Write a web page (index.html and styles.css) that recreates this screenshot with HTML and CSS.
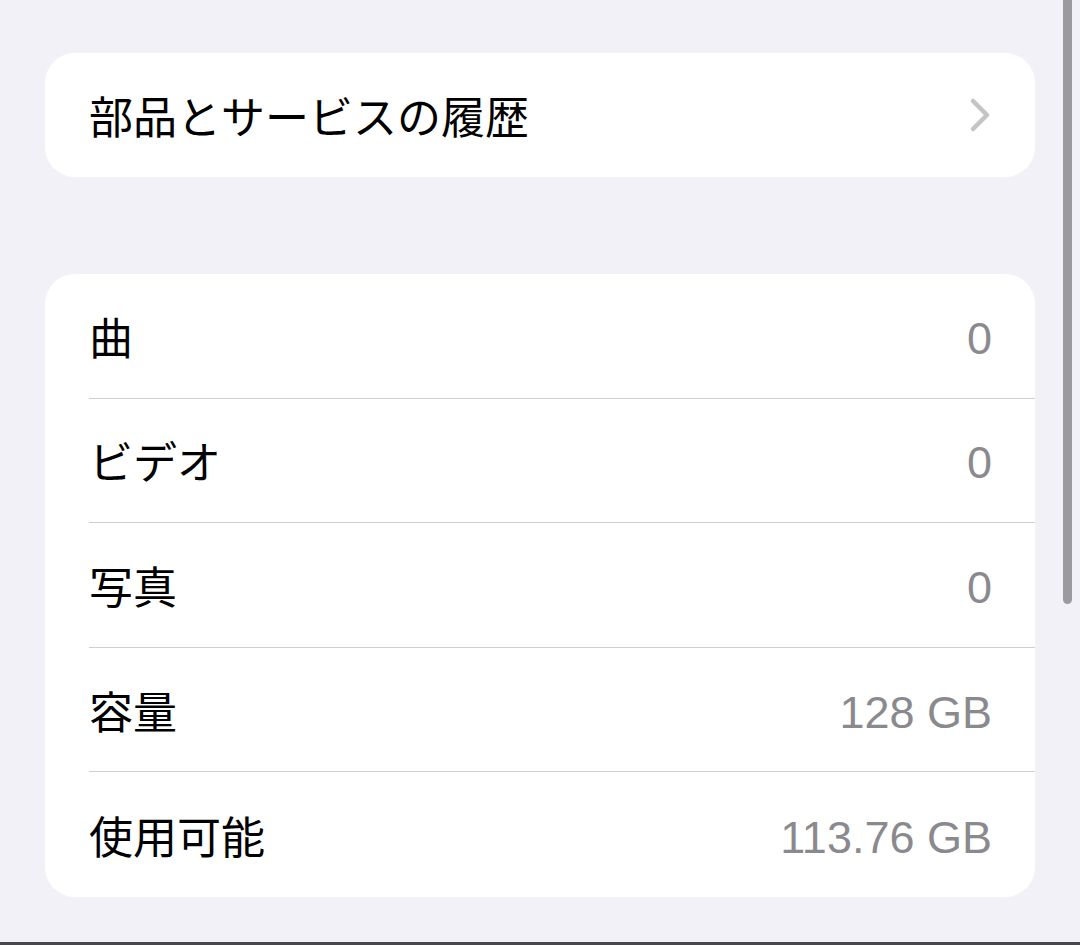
FILE: index.html
```html
<!DOCTYPE html>
<html lang="ja">
<head>
    <meta charset="UTF-8">
    <meta name="viewport" content="width=device-width, initial-scale=1.0">
    <title>情報</title>
    <link rel="stylesheet" href="styles.css">
</head>
<body>
    <div class="screen">
        <div class="content">
            <div class="group">
                <div class="row link">
                    <span class="label">部品とサービスの履歴</span>
                    <svg class="chevron" width="24" height="36" viewBox="0 0 24 36">
                        <path d="M5 4 L19 18 L5 32" fill="none" stroke="#c4c4c7" stroke-width="4.5" stroke-linecap="round" stroke-linejoin="round"/>
                    </svg>
                </div>
            </div>

            <div class="group">
                <div class="row"><span class="label">曲</span><span class="value">0</span></div>
                <div class="row"><span class="label">ビデオ</span><span class="value">0</span></div>
                <div class="row"><span class="label">写真</span><span class="value">0</span></div>
                <div class="row"><span class="label">容量</span><span class="value">128 GB</span></div>
                <div class="row"><span class="label">使用可能</span><span class="value">113.76 GB</span></div>
            </div>
        </div>
        <div class="scrollbar"></div>
    </div>
    <div class="bottom-edge"></div>
</body>
</html>
```

FILE: styles.css
```css
html, body {
    margin: 0;
    height: 100%;
}
body {
    font-family: "Noto Sans CJK JP", "Liberation Sans", sans-serif;
    background-color: #f2f1f7;
    display: flex;
    flex-direction: column;
    overflow: hidden;
}
.screen {
    position: relative;
    flex: 1;
}
.content {
    padding: 53px 45px 0 45px;
    display: flex;
    flex-direction: column;
    gap: 97px;
}
.group {
    background: #fff;
    border-radius: 30px;
    overflow: hidden;
}
.row {
    height: 124.6px;
    margin-left: 44px;
    padding-right: 45px;
    display: flex;
    align-items: center;
    justify-content: space-between;
    border-bottom: 1.5px solid #cfcfd3;
    box-sizing: border-box;
}
.row:last-child {
    border-bottom: none;
}
.link {
    height: 124px;
}
.label {
    font-size: 44px;
    color: #000;
}
.value {
    font-family: "Liberation Sans", sans-serif;
    font-size: 45px;
    color: #8a8a8e;
    padding-top: 6px;
    margin-right: -2px;
}
.chevron {
    display: block;
    margin-right: -2px;
}
.scrollbar {
    position: absolute;
    top: -6px;
    right: 8px;
    width: 9px;
    height: 610px;
    border-radius: 5px;
    background: #9b9a9f;
}
.bottom-edge {
    height: 3px;
    background: #48484a;
}
```
